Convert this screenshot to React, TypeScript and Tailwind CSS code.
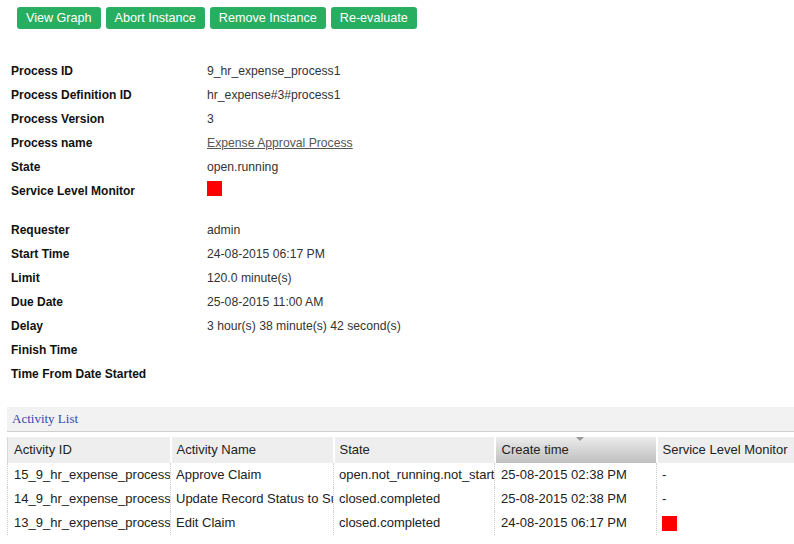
const buttons = ['View Graph', 'Abort Instance', 'Remove Instance', 'Re-evaluate'];

const details: { label: string; value?: string; link?: boolean; slm?: boolean }[] = [
  { label: 'Process ID', value: '9_hr_expense_process1' },
  { label: 'Process Definition ID', value: 'hr_expense#3#process1' },
  { label: 'Process Version', value: '3' },
  { label: 'Process name', value: 'Expense Approval Process', link: true },
  { label: 'State', value: 'open.running' },
  { label: 'Service Level Monitor', slm: true },
];

const timing = [
  { label: 'Requester', value: 'admin' },
  { label: 'Start Time', value: '24-08-2015 06:17 PM' },
  { label: 'Limit', value: '120.0 minute(s)' },
  { label: 'Due Date', value: '25-08-2015 11:00 AM' },
  { label: 'Delay', value: '3 hour(s) 38 minute(s) 42 second(s)' },
  { label: 'Finish Time', value: '' },
  { label: 'Time From Date Started', value: '' },
];

const activities = [
  { id: '15_9_hr_expense_process1_hr_expense_3_process1_approve_claim', name: 'Approve Claim', state: 'open.not_running.not_started', created: '25-08-2015 02:38 PM', slm: '-' },
  { id: '14_9_hr_expense_process1_hr_expense_3_process1_update', name: 'Update Record Status to Submitted', state: 'closed.completed', created: '25-08-2015 02:38 PM', slm: '-' },
  { id: '13_9_hr_expense_process1_hr_expense_3_process1_edit', name: 'Edit Claim', state: 'closed.completed', created: '24-08-2015 06:17 PM', slm: 'red' },
];

function DetailRow({ label, children }: { label: string; children?: React.ReactNode }) {
  return (
    <div className="grid grid-cols-[196px_1fr] h-[24px] items-center">
      <span className="font-bold text-[12px] text-[#111]">{label}</span>
      <span className="text-[12.2px] text-[#333]">{children}</span>
    </div>
  );
}

export default function App() {
  return (
    <div className="w-[794px] h-[544px] overflow-hidden bg-white font-['Liberation_Sans',Arial,sans-serif] text-[#222]">
      {/* Toolbar */}
      <div className="flex gap-[5px] pl-[17px] pt-[7px]">
        {buttons.map((b) => (
          <button
            key={b}
            className="h-[22px] px-[9px] rounded-[3px] bg-[#27ae60] text-white text-[12.6px] leading-[22px]"
          >
            {b}
          </button>
        ))}
      </div>

      {/* Instance details */}
      <div className="mt-[30px] pl-[11px]">
        {details.map((d) => (
          <DetailRow key={d.label} label={d.label}>
            {d.slm ? (
              <span className="block w-[15px] h-[15px] bg-[#ff0000] -mt-[6px]" />
            ) : d.link ? (
              <span className="underline text-[#555]">{d.value}</span>
            ) : (
              d.value
            )}
          </DetailRow>
        ))}
        <div className="h-[15px]" />
        {timing.map((t) => (
          <DetailRow key={t.label} label={t.label}>
            {t.value}
          </DetailRow>
        ))}
      </div>

      {/* Activity list */}
      <div className="mt-[21px] ml-[7px]">
        <div className="h-[25px] bg-[#f2f2f2] border-b border-[#d0d0d0] flex items-center pl-[5px]">
          <span className="font-['Liberation_Serif','Times_New_Roman',serif] text-[13px] text-[#3546b5]">
            Activity List
          </span>
        </div>
        <table className="mt-[5px] table-fixed border-collapse w-[812px] text-[13px] text-[#222]">
          <colgroup>
            <col className="w-[163px]" />
            <col className="w-[163px]" />
            <col className="w-[161px]" />
            <col className="w-[162px]" />
            <col className="w-[163px]" />
          </colgroup>
          <thead>
            <tr className="h-[26px]">
              <th className="bg-[#eeeeee] border-l border-[#d8d8d8] border-r-2 border-r-white text-left font-normal pl-[6px]">
                Activity ID
              </th>
              <th className="bg-[#eeeeee] border-r-2 border-white text-left font-normal pl-[5px]">Activity Name</th>
              <th className="bg-[#eeeeee] border-r-2 border-white text-left font-normal pl-[5px]">State</th>
              <th className="relative bg-gradient-to-b from-[#ececec] to-[#bfbfbf] border-r-2 border-white text-left font-normal pl-[6px]">
                <span className="absolute left-1/2 top-0 w-0 h-0 border-x-[4px] border-x-transparent border-t-[4px] border-t-[#999]" />
                Create time
              </th>
              <th className="bg-[#eeeeee] text-left font-normal pl-[5px] whitespace-nowrap">Service Level Monitor</th>
            </tr>
          </thead>
          <tbody>
            {activities.map((a) => (
              <tr key={a.id} className="h-[24px]">
                <td className="border-l border-dotted border-[#ccc] border-r pl-[6px] whitespace-nowrap overflow-hidden">
                  {a.id}
                </td>
                <td className="border-r border-dotted border-[#ccc] pl-[5px] whitespace-nowrap overflow-hidden">{a.name}</td>
                <td className="border-r border-dotted border-[#ccc] pl-[5px] whitespace-nowrap overflow-hidden">{a.state}</td>
                <td className="border-r border-dotted border-[#ccc] pl-[6px] whitespace-nowrap overflow-hidden">{a.created}</td>
                <td className="pl-[5px] whitespace-nowrap overflow-hidden">
                  {a.slm === 'red' ? <span className="block w-[15px] h-[15px] bg-[#ff0000]" /> : a.slm}
                </td>
              </tr>
            ))}
          </tbody>
        </table>
      </div>
    </div>
  );
}
